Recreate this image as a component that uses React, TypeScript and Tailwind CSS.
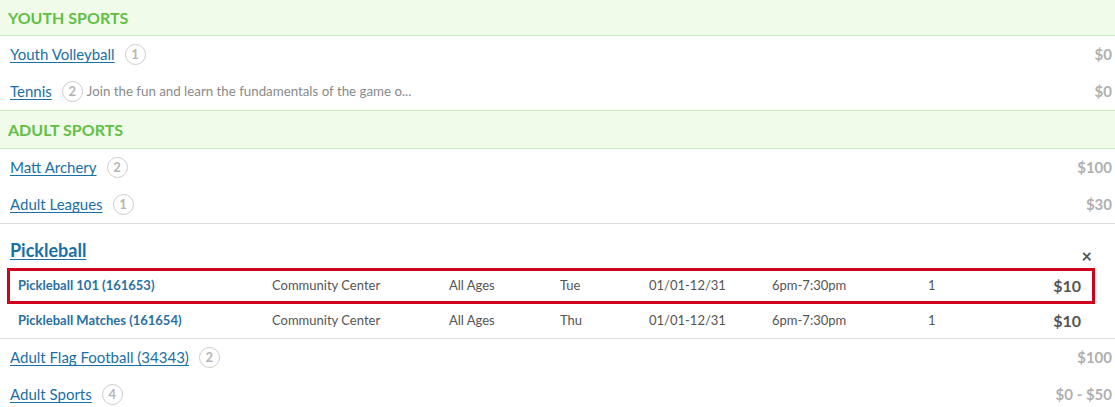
const font = { fontFamily: "Lato, 'Open Sans', sans-serif" }

type Item = { name: string; count: number; price: string; desc?: string }

const Badge = ({ n }: { n: number }) => (
  <span className="ml-[10px] inline-flex h-[21px] w-[21px] items-center justify-center rounded-full border-[1.5px] border-[#cccccc] text-[13px] font-bold text-[#b5b5b5]">
    {n}
  </span>
)

const Row = ({ item }: { item: Item }) => (
  <div className="flex h-[37px] items-center pl-[10px] pr-[3px]">
    <a href="#" className="text-[15px] text-[#1a6fa6] underline underline-offset-2">{item.name}</a>
    <Badge n={item.count} />
    {item.desc && <span className="ml-[4px] text-[13.3px] text-[#8a8a8a]">{item.desc}</span>}
    <span className="ml-auto text-[15px] font-bold text-[#b0b0b0]">{item.price}</span>
  </div>
)

const Header = ({ title, tall }: { title: string; tall?: boolean }) => (
  <div className={`flex items-center border-b border-[#c9ecc0] bg-[#f1fbea] pl-[8px] text-[16px] font-bold text-[#62bf45] ${tall ? "h-[38px]" : "h-[36px]"}`}>
    {title}
  </div>
)

type Session = { name: string; place: string; ages: string; day: string; dates: string; time: string; n: string; price: string }

const SessionRow = ({ s, hi }: { s: Session; hi?: boolean }) => (
  <div className={`flex items-center pl-[8px] pr-[11px] text-[13px] ${hi ? "h-[36px] border-[3px] border-[#d0021b]" : "h-[34px] border-x-[3px] border-transparent"}`}>
    <span className="w-[254px] text-[13px] font-bold text-[#2a6fa3]">{s.name}</span>
    <span className="w-[177px] text-[#555]">{s.place}</span>
    <span className="w-[111px] text-[#555]">{s.ages}</span>
    <span className="w-[89px] text-[#555]">{s.day}</span>
    <span className="w-[123px] text-[#555]">{s.dates}</span>
    <span className="w-[156px] text-[#555]">{s.time}</span>
    <span className="text-[#555]">{s.n}</span>
    <span className="ml-auto text-[16px] font-bold text-[#555]">{s.price}</span>
  </div>
)

const sessions: Session[] = [
  { name: "Pickleball 101 (161653)", place: "Community Center", ages: "All Ages", day: "Tue", dates: "01/01-12/31", time: "6pm-7:30pm", n: "1", price: "$10" },
  { name: "Pickleball Matches (161654)", place: "Community Center", ages: "All Ages", day: "Thu", dates: "01/01-12/31", time: "6pm-7:30pm", n: "1", price: "$10" },
]

export default function App() {
  return (
    <div className="w-[1115px] bg-white" style={font}>
      <Header title="YOUTH SPORTS" />
      <Row item={{ name: "Youth Volleyball", count: 1, price: "$0" }} />
      <Row item={{ name: "Tennis", count: 2, price: "$0", desc: "Join the fun and learn the fundamentals of the game o..." }} />
      <div className="border-t border-[#c9ecc0]">
        <Header title="ADULT SPORTS" tall />
      </div>
      <Row item={{ name: "Matt Archery", count: 2, price: "$100" }} />
      <Row item={{ name: "Adult Leagues", count: 1, price: "$30" }} />
      <div className="border-y border-[#dcdcdc]">
        <div className="flex items-end justify-between pl-[10px] pr-[23px] pt-[14px]">
          <a href="#" className="text-[18px] font-bold leading-[24px] text-[#1a6fa6] underline underline-offset-2">Pickleball</a>
          <span className="text-[18px] font-bold leading-[12px] text-[#555]">×</span>
        </div>
        <div className="pl-[7px] pr-[20px] pt-[6px]">
          <SessionRow s={sessions[0]} hi />
          <SessionRow s={sessions[1]} />
        </div>
      </div>
      <Row item={{ name: "Adult Flag Football (34343)", count: 2, price: "$100" }} />
      <Row item={{ name: "Adult Sports", count: 4, price: "$0 - $50" }} />
    </div>
  )
}
